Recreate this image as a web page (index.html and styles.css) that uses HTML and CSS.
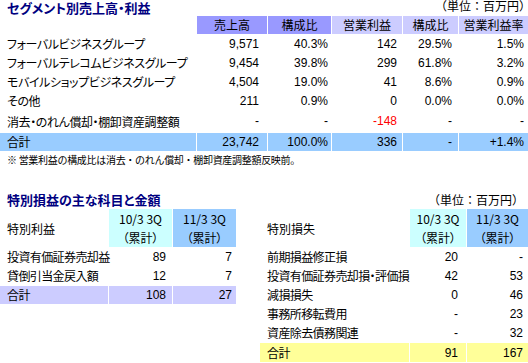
FILE: index.html
```html
<!DOCTYPE html>
<html lang="ja">
<head>
<meta charset="utf-8">
<title>セグメント別売上高・利益</title>
<link rel="stylesheet" href="styles.css">
</head>
<body>
<div class="sec-head">
  <h2 class="title">セグメント別売上高・利益</h2>
  <span class="unit unit-top">（単位：百万円）</span>
</div>
<table class="grid seg">
  <colgroup>
    <col class="w196"><col class="w70"><col class="w63"><col class="w70"><col class="w55"><col class="w69">
  </colgroup>
  <thead>
    <tr class="hdr">
      <th></th>
      <th class="bg-dark">売上高</th>
      <th class="bg-dark">構成比</th>
      <th class="bg-lav">営業利益</th>
      <th class="bg-lav">構成比</th>
      <th class="bg-lav">営業利益率</th>
    </tr>
  </thead>
  <tbody>
    <tr><td class="lbl">フォーバルビジネスグループ</td><td class="num">9,571</td><td class="num">40.3%</td><td class="num">142</td><td class="num">29.5%</td><td class="num">1.5%</td></tr>
    <tr><td class="lbl">フォーバルテレコムビジネスグループ</td><td class="num">9,454</td><td class="num">39.8%</td><td class="num">299</td><td class="num">61.8%</td><td class="num">3.2%</td></tr>
    <tr><td class="lbl">モバイルショップビジネスグループ</td><td class="num">4,504</td><td class="num">19.0%</td><td class="num">41</td><td class="num">8.6%</td><td class="num">0.9%</td></tr>
    <tr><td class="lbl">その他</td><td class="num">211</td><td class="num">0.9%</td><td class="num">0</td><td class="num">0.0%</td><td class="num">0.0%</td></tr>
    <tr class="tall"><td class="lbl">消去・のれん償却・棚卸資産調整額</td><td class="num">-</td><td class="num">-</td><td class="num neg">-148</td><td class="num">-</td><td class="num">-</td></tr>
    <tr class="total-blue"><td class="lbl">合計</td><td class="num">23,742</td><td class="num">100.0%</td><td class="num">336</td><td class="num">-</td><td class="num">+1.4%</td></tr>
  </tbody>
</table>
<p class="note">※ 営業利益の構成比は消去・のれん償却・棚卸資産調整額反映前。</p>

<div class="sec-head sec2">
  <h2 class="title">特別損益の主な科目と金額</h2>
  <span class="unit unit-bottom">（単位：百万円）</span>
</div>
<div class="pair">
  <table class="grid small-left">
    <colgroup><col class="w108"><col class="w63"><col class="w63"></colgroup>
    <thead>
      <tr class="hdr2">
        <th class="lbl head-lbl">特別利益</th>
        <th class="bg-cyan">10/3 3Q<br>（累計）</th>
        <th class="bg-blue">11/3 3Q<br>（累計）</th>
      </tr>
    </thead>
    <tbody>
      <tr><td class="lbl">投資有価証券売却益</td><td class="num">89</td><td class="num">7</td></tr>
      <tr><td class="lbl">貸倒引当金戻入額</td><td class="num">12</td><td class="num">7</td></tr>
      <tr class="total-lav"><td class="lbl">合計</td><td class="num">108</td><td class="num">27</td></tr>
    </tbody>
  </table>
  <table class="grid small-right">
    <colgroup><col class="w149"><col class="w56"><col class="w61"></colgroup>
    <thead>
      <tr class="hdr2">
        <th class="lbl head-lbl">特別損失</th>
        <th class="bg-cyan">10/3 3Q<br>（累計）</th>
        <th class="bg-blue">11/3 3Q<br>（累計）</th>
      </tr>
    </thead>
    <tbody>
      <tr><td class="lbl">前期損益修正損</td><td class="num">20</td><td class="num">-</td></tr>
      <tr><td class="lbl">投資有価証券売却損・評価損</td><td class="num">42</td><td class="num">53</td></tr>
      <tr><td class="lbl">減損損失</td><td class="num">0</td><td class="num">46</td></tr>
      <tr><td class="lbl">事務所移転費用</td><td class="num">-</td><td class="num">23</td></tr>
      <tr><td class="lbl">資産除去債務関連</td><td class="num">-</td><td class="num">32</td></tr>
      <tr class="total-yellow"><td class="lbl">合計</td><td class="num">91</td><td class="num">167</td></tr>
    </tbody>
  </table>
</div>
</body>
</html>
```

FILE: styles.css
```css
html, body {
  margin: 0;
  padding: 0;
  background: #fff;
  overflow: hidden;
}
body {
  font-family: "Noto Sans CJK JP", sans-serif;
  font-size: 12px;
  color: #000;
  font-feature-settings: "palt";
}

.sec-head {
  display: flex;
  justify-content: space-between;
  align-items: flex-start;
  height: 16px;
}
.title {
  margin: 0;
  padding-left: 7px;
  font-size: 13px;
  line-height: 16px;
  font-weight: bold;
  color: #000080;
}
.unit {
  font-size: 12px;
  line-height: 16px;
  font-feature-settings: normal;
}
.unit-top {
  line-height: 12px;
  margin-right: -3px;
}
.unit-bottom {
  padding-right: 4px;
}
.sec2 { margin-top: 23px; }

.grid {
  border-collapse: separate;
  border-spacing: 1px;
  table-layout: fixed;
}
.grid th,
.grid td {
  height: 18px;
  line-height: 18px;
  padding: 0;
  white-space: nowrap;
}
.grid th {
  font-weight: normal;
  text-align: center;
}
.grid .lbl {
  text-align: left;
  padding-left: 7px;
  letter-spacing: -0.4px;
}
.grid .num {
  text-align: right;
  padding-right: 6px;
  font-family: "Liberation Sans Narrow", "Liberation Sans", sans-serif;
  font-size: 12px;
}
.neg { color: #ff0000; }

.seg {
  width: 530px;
  margin: -1px;
}
.seg td:nth-child(2) { padding-right: 8px; }
.seg td:nth-child(3) { padding-right: 3px; }
.seg td:nth-child(4) { padding-right: 5px; }
.seg td:nth-child(5) { padding-right: 6px; }
.seg td:nth-child(6) { padding-right: 4px; }
.seg .tall td { height: 21px; line-height: 21px; }

.w196 { width: 196px; }
.w70 { width: 70px; }
.w63 { width: 63px; }
.w55 { width: 55px; }
.w69 { width: 69px; }
.w108 { width: 108px; }
.w149 { width: 149px; }
.w56 { width: 56px; }
.w61 { width: 61px; }

.bg-dark { background: #9999ff; }
.bg-lav { background: #ccccff; }
.bg-cyan { background: #ccffff; }
.bg-blue { background: #99ccff; }
.total-blue td { background: #99ccff; }
.total-lav td { background: #ccccff; }
.total-yellow td { background: #ffff99; }

.note {
  margin: 0;
  padding-left: 7px;
  font-size: 10px;
  line-height: 18px;
  letter-spacing: -0.3px;
  font-feature-settings: normal;
  white-space: pre;
}

.pair {
  display: flex;
  align-items: flex-start;
  gap: 22px;
  margin-left: -1px;
}
.small-left { width: 238px; }
.small-right { width: 270px; }
.small-left .lbl,
.small-right .lbl { letter-spacing: -0.6px; }
.hdr2 th {
  height: 38px;
  line-height: 19px;
}
.grid .head-lbl { vertical-align: middle; letter-spacing: 0; }
.small-left td:nth-child(2) { padding-right: 6px; }
.small-left td:nth-child(3) { padding-right: 4px; }
.small-right td:nth-child(2) { padding-right: 8px; }
.small-right td:nth-child(3) { padding-right: 5px; }
.small-right .total-yellow td { height: 19px; }
```
